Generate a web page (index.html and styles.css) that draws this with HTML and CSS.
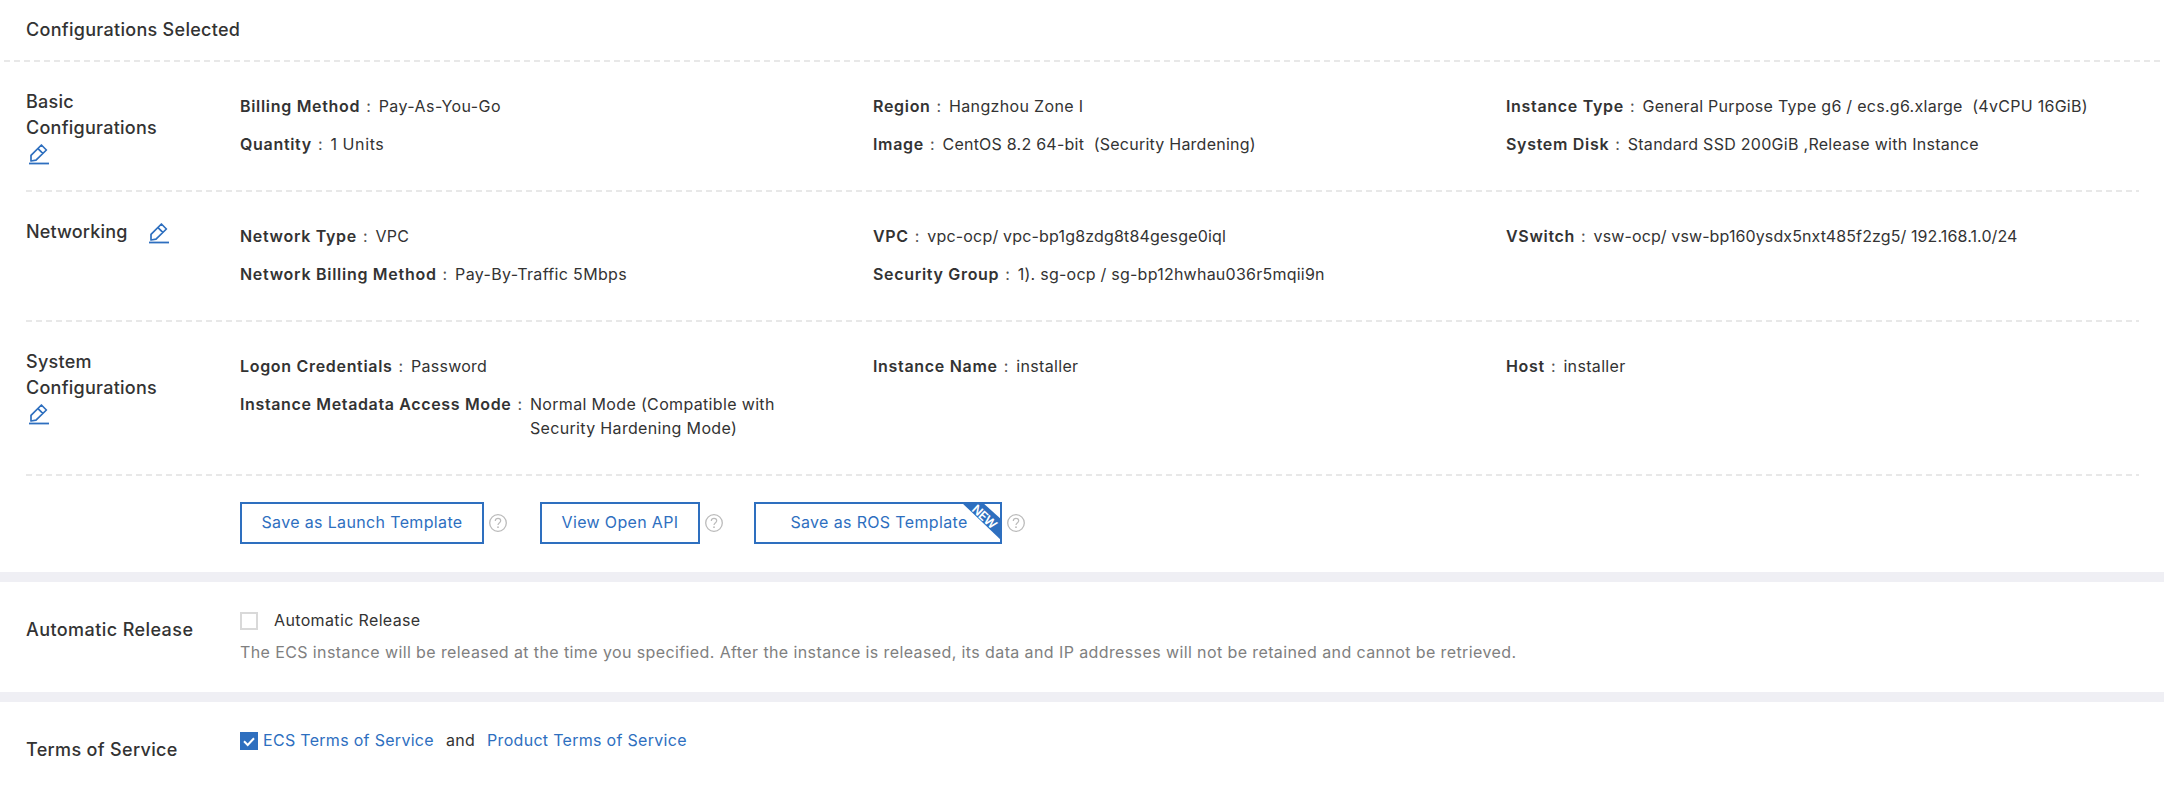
FILE: index.html
```html
<!DOCTYPE html>
<html lang="en">
<head>
<meta charset="utf-8">
<title>Configurations Selected</title>
<link rel="stylesheet" href="styles.css">
</head>
<body>
<svg class="defs" width="0" height="0">
  <symbol id="edit" viewBox="0 0 20 21">
    <path d="M2 17V11.4L12.4 1L17.4 6L7 16.2L2 17ZM9 4.6L14 9.6" fill="none" stroke="currentColor" stroke-width="1.7" stroke-linejoin="round"/>
    <path d="M0 19.5H20" stroke="currentColor" stroke-width="1.8"/>
  </symbol>
  <symbol id="help" viewBox="0 0 18 18">
    <circle cx="9" cy="9" r="8.3" fill="none" stroke="currentColor" stroke-width="1.3"/>
    <path d="M6.3 7C6.3 5.3 7.4 4.4 9 4.4S11.7 5.4 11.7 6.8C11.7 8.6 9 8.8 9 11" fill="none" stroke="currentColor" stroke-width="1.2"/>
    <circle cx="9" cy="13.2" r=".9" fill="currentColor"/>
  </symbol>
</svg>
<main>
  <section class="config">
    <header class="title">Configurations Selected</header>
    <div class="section">
      <h2 class="name">Basic<br>Configurations<br><svg class="edit below"><use href="#edit"/></svg></h2>
      <dl class="grid">
        <div class="item"><dt>Billing Method</dt><i>:</i><dd class="wide">Pay-As-You-Go</dd></div>
        <div class="item"><dt>Region</dt><i>:</i><dd>Hangzhou Zone I</dd></div>
        <div class="item"><dt>Instance Type</dt><i>:</i><dd class="spec">General Purpose Type g6 / ecs.g6.xlarge&nbsp; (4vCPU 16GiB)</dd></div>
        <div class="item"><dt>Quantity</dt><i>:</i><dd class="units">1 Units</dd></div>
        <div class="item"><dt>Image</dt><i>:</i><dd class="snug">CentOS 8.2 64-bit&nbsp; (Security Hardening)</dd></div>
        <div class="item"><dt>System Disk</dt><i>:</i><dd class="spec">Standard SSD 200GiB ,Release with Instance</dd></div>
      </dl>
    </div>
    <div class="section">
      <h2 class="name network">Networking<svg class="edit beside"><use href="#edit"/></svg></h2>
      <dl class="grid">
        <div class="item"><dt>Network Type</dt><i>:</i><dd>VPC</dd></div>
        <div class="item"><dt>VPC</dt><i>:</i><dd class="ident">vpc-ocp/ vpc-bp1g8zdg8t84gesge0iql</dd></div>
        <div class="item"><dt>VSwitch</dt><i>:</i><dd class="ident tight">vsw-ocp/ vsw-bp160ysdx5nxt485f2zg5/ 192.168.1.0/24</dd></div>
        <div class="item"><dt class="full">Network Billing Method</dt><i>:</i><dd>Pay-By-Traffic 5Mbps</dd></div>
        <div class="item"><dt>Security Group</dt><i>:</i><dd class="snug">1). sg-ocp / sg-bp12hwhau036r5mqii9n</dd></div>
      </dl>
    </div>
    <div class="section tall">
      <h2 class="name">System<br>Configurations<br><svg class="edit below"><use href="#edit"/></svg></h2>
      <dl class="grid">
        <div class="item"><dt>Logon Credentials</dt><i>:</i><dd class="snug">Password</dd></div>
        <div class="item"><dt>Instance Name</dt><i>:</i><dd>installer</dd></div>
        <div class="item"><dt>Host</dt><i>:</i><dd>installer</dd></div>
        <div class="item"><dt class="long">Instance Metadata Access Mode</dt><i>:</i><dd>Normal Mode (Compatible with<br>Security Hardening Mode)</dd></div>
      </dl>
    </div>
    <div class="actions">
      <button class="btn launch">Save as Launch Template</button><svg class="help first"><use href="#help"/></svg>
      <button class="btn api">View Open API</button><svg class="help"><use href="#help"/></svg>
      <button class="btn ros">Save as ROS Template<svg class="ribbon" viewBox="0 0 40 40"><path d="M-1 0H20L40 18V39Z" fill="#2e6fbf"/><text x="22.5" y="19.2" transform="rotate(43 22.5 14.5)" text-anchor="middle">NEW</text></svg></button><svg class="help"><use href="#help"/></svg>
    </div>
  </section>
  <section class="panel release">
    <h2 class="label">Automatic Release</h2>
    <div class="body">
      <label class="check"><span class="box"></span><span class="caption">Automatic Release</span></label>
      <p class="hint">The ECS instance will be released at the time you specified. After the instance is released, its data and IP addresses will not be retained and cannot be retrieved.</p>
    </div>
  </section>
  <section class="panel terms">
    <h2 class="label service">Terms of Service</h2>
    <div class="agree">
      <span class="box on"><svg viewBox="0 0 18 18"><path d="M4 9.3L7.7 13L14 6.2" fill="none" stroke="#fff" stroke-width="2"/></svg></span>
      <span class="caption"><a>ECS Terms of Service</a><span class="and">and</span><a>Product Terms of Service</a></span>
    </div>
  </section>
</main>
</body>
</html>
```
FILE: styles.css
```css
* { box-sizing: border-box; }
body {
  margin: 0;
  background: #fff;
  color: #333;
  font: 16px/24px Inter, "Liberation Sans", sans-serif;
  letter-spacing: .34px;
}
.defs { display: block; }
h2, dl, dd, p { margin: 0; }

.config { height: 572px; }
.title {
  height: 62px;
  padding: 17px 0 0 26px;
  font-size: 18px;
  line-height: 26px;
  font-weight: 500;
  letter-spacing: .29px;
  background: repeating-linear-gradient(90deg, #e8e8e8 0 6px, transparent 6px 10px) 4px 100% / 100% 2px no-repeat;
}
.section {
  display: flex;
  height: 130px;
  margin-left: 26px;
  width: 2113px;
  background: repeating-linear-gradient(90deg, #e8e8e8 0 6px, transparent 6px 10px) 0 100% / 100% 2px no-repeat;
}
.section.tall { height: 154px; }
.name {
  flex: 0 0 214px;
  padding-top: 27px;
  font-size: 18px;
  line-height: 26px;
  font-weight: 500;
  letter-spacing: .25px;
}
.name.network { letter-spacing: .15px; }
.edit { width: 20px; height: 21px; color: #2e6fbf; }
.edit.below { display: block; margin: 3px 0 0 3px; }
.edit.beside { margin-left: 22px; vertical-align: -6px; }
.grid {
  display: grid;
  grid-template-columns: repeat(3, 633px);
  gap: 14px 0;
  align-content: start;
  padding-top: 32px;
}
.item { display: flex; white-space: nowrap; }
dt { font-weight: 600; letter-spacing: .69px; }
dt.full { letter-spacing: .72px; }
dt.long { letter-spacing: .64px; }
.item i { width: 18.5px; padding-left: 6px; font-style: normal; color: #555; }
.wide { letter-spacing: .43px; }
.units { letter-spacing: .6px; }
.spec { letter-spacing: .28px; }
.ident { letter-spacing: .18px; }
.ident.tight { letter-spacing: .11px; }
.snug { letter-spacing: .24px; }

.actions { display: flex; align-items: center; padding: 26px 0 0 240px; }
.btn {
  position: relative;
  height: 42px;
  padding: 0 0 2px;
  border: 2px solid #2e6fbf;
  background: #fff;
  color: #2e6fbf;
  font: inherit;
  letter-spacing: .35px;
  white-space: nowrap;
  text-align: center;
}
.launch { width: 244px; }
.api { width: 160px; }
.ros { width: 248px; padding-left: 2px; }
.help { width: 18px; height: 18px; margin: 0 31px 0 5px; color: #bbb; }
.help.first { margin-right: 33px; }
.ribbon { position: absolute; top: -2px; right: -2px; width: 40px; height: 40px; overflow: visible; }
.ribbon text { font: 600 12.5px Inter, sans-serif; letter-spacing: -.5px; fill: #fff; }

.panel { display: flex; border-top: 10px solid #efeff4; height: 120px; }
.label {
  flex: 0 0 240px;
  padding: 35px 0 0 26px;
  font-size: 18px;
  line-height: 26px;
  font-weight: 500;
  letter-spacing: .42px;
}
.label.service { letter-spacing: .33px; }
.body { padding-top: 27px; }
.check { display: flex; align-items: center; gap: 16px; letter-spacing: .36px; }
.caption { padding-bottom: 2px; line-height: 22px; }
.box { width: 18px; height: 18px; border: 2px solid #d9d9d9; }
.box.on { border: 0; background: #2e6fbf; margin-right: 5px; }
.box svg { display: block; width: 18px; height: 18px; }
.hint { margin-top: 7px; color: #808080; letter-spacing: .395px; white-space: nowrap; }
.agree { display: flex; align-items: center; height: 24px; margin-top: 27px; letter-spacing: .3px; }
.agree a { color: #2e6fbf; }
.and { margin: 0 12px; }
```
